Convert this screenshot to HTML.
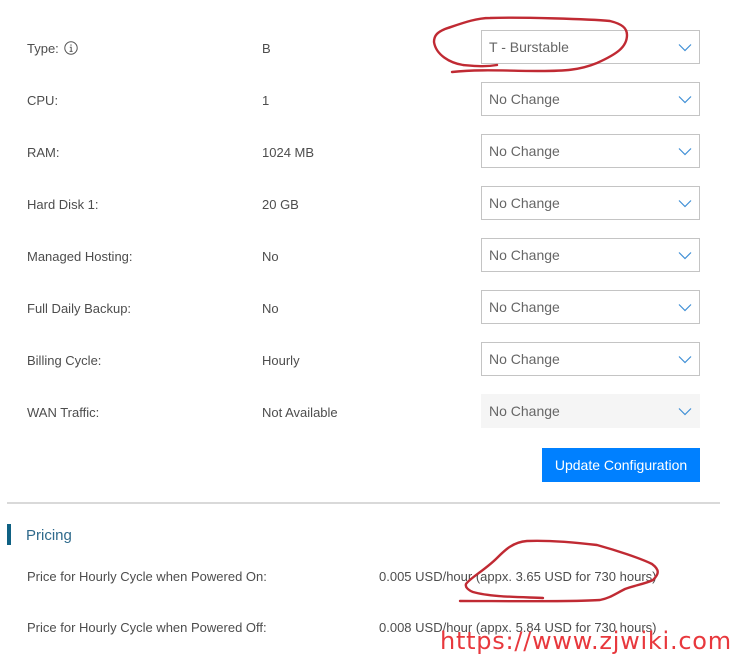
<!DOCTYPE html>
<html><head><meta charset="utf-8">
<style>
html,body{margin:0;padding:0;background:#fff}
#p{position:relative;width:738px;height:658px;overflow:hidden;background:#fff;font-family:"Liberation Sans",sans-serif;font-size:13px;color:#4d4d4d}
.t{position:absolute;line-height:16px;white-space:nowrap}
.s{position:absolute;left:481px;width:217px;height:32px;border:1px solid #c4c4c4;background:#fff;box-sizing:content-box}
.s.d{background:#f5f5f5;border-color:#f5f5f5}
.s span{position:absolute;left:7px;top:8px;line-height:16px;font-size:14px;color:#666}
.s svg{position:absolute;left:196px;top:12px}
</style></head><body><div id="p">
<div class="t" style="left:27px;top:41px">Type:</div>
<svg style="position:absolute;left:64px;top:41px" width="14" height="14" viewBox="0 0 14 14"><circle cx="7" cy="7" r="6.2" fill="none" stroke="#555" stroke-width="1"/><path d="M7 3.4v1.3M5.8 6.2H7.2V10.4M5.6 10.4H8.6" fill="none" stroke="#555" stroke-width="1"/></svg>
<div class="t" style="left:262px;top:41px">B</div>
<div class="t" style="left:27px;top:93px">CPU:</div><div class="t" style="left:262px;top:93px">1</div>
<div class="t" style="left:27px;top:145px">RAM:</div><div class="t" style="left:262px;top:145px">1024 MB</div>
<div class="t" style="left:27px;top:197px">Hard Disk 1:</div><div class="t" style="left:262px;top:197px">20 GB</div>
<div class="t" style="left:27px;top:249px">Managed Hosting:</div><div class="t" style="left:262px;top:249px">No</div>
<div class="t" style="left:27px;top:301px">Full Daily Backup:</div><div class="t" style="left:262px;top:301px">No</div>
<div class="t" style="left:27px;top:353px">Billing Cycle:</div><div class="t" style="left:262px;top:353px">Hourly</div>
<div class="t" style="left:27px;top:405px">WAN Traffic:</div><div class="t" style="left:262px;top:405px">Not Available</div>

<div class="s" style="top:30px"><span>T - Burstable</span><svg width="14" height="9" viewBox="0 0 14 9"><path d="M1 1.5L7 7.5L13 1.5" fill="none" stroke="#3f8fd6" stroke-width="1.2"/></svg></div>
<div class="s" style="top:82px"><span>No Change</span><svg width="14" height="9" viewBox="0 0 14 9"><path d="M1 1.5L7 7.5L13 1.5" fill="none" stroke="#3f8fd6" stroke-width="1.2"/></svg></div>
<div class="s" style="top:134px"><span>No Change</span><svg width="14" height="9" viewBox="0 0 14 9"><path d="M1 1.5L7 7.5L13 1.5" fill="none" stroke="#3f8fd6" stroke-width="1.2"/></svg></div>
<div class="s" style="top:186px"><span>No Change</span><svg width="14" height="9" viewBox="0 0 14 9"><path d="M1 1.5L7 7.5L13 1.5" fill="none" stroke="#3f8fd6" stroke-width="1.2"/></svg></div>
<div class="s" style="top:238px"><span>No Change</span><svg width="14" height="9" viewBox="0 0 14 9"><path d="M1 1.5L7 7.5L13 1.5" fill="none" stroke="#3f8fd6" stroke-width="1.2"/></svg></div>
<div class="s" style="top:290px"><span>No Change</span><svg width="14" height="9" viewBox="0 0 14 9"><path d="M1 1.5L7 7.5L13 1.5" fill="none" stroke="#3f8fd6" stroke-width="1.2"/></svg></div>
<div class="s" style="top:342px"><span>No Change</span><svg width="14" height="9" viewBox="0 0 14 9"><path d="M1 1.5L7 7.5L13 1.5" fill="none" stroke="#3f8fd6" stroke-width="1.2"/></svg></div>
<div class="s d" style="top:394px"><span>No Change</span><svg width="14" height="9" viewBox="0 0 14 9"><path d="M1 1.5L7 7.5L13 1.5" fill="none" stroke="#3f8fd6" stroke-width="1.2"/></svg></div>

<div style="position:absolute;left:542px;top:448px;width:158px;height:34px;background:#0080ff;color:#fff;font-size:14px;line-height:34px;text-align:center">Update Configuration</div>
<div style="position:absolute;left:7px;top:502px;width:713px;height:2px;background:#d9d9d9"></div>
<div style="position:absolute;left:7px;top:524px;width:4px;height:21px;background:#0f6183"></div>
<div class="t" style="left:26px;top:527px;font-size:15px;line-height:18px;color:#2f6a8c">Pricing</div>
<div class="t" style="left:27px;top:569px">Price for Hourly Cycle when Powered On:</div>
<div class="t" style="left:379px;top:569px">0.005 USD/hour (appx. 3.65 USD for 730 hours)</div>
<div class="t" style="left:27px;top:620px">Price for Hourly Cycle when Powered Off:</div>
<div class="t" style="left:379px;top:620px">0.008 USD/hour (appx. 5.84 USD for 730 hours)</div>

<svg style="position:absolute;left:0;top:0" width="738" height="658" viewBox="0 0 738 658" fill="none" stroke="#c02a33" stroke-width="2.4" stroke-linecap="round" stroke-linejoin="round">
<path d="M497 65C485 67 475 66 463 65C450 63 436 55 434 42C434 35 438 32 445 29C460 24 475 18 490 18C520 17 590 19 610 21C622 24 627 28 627 35C627 47 617 54 597 63C580 70 565 71 540 71C510 71 480 69 452 72"/>
<path d="M543 598C520 597 490 597 473 592C468 590 465 587 466 584C470 578 485 570 497 558C505 550 513 542 527 541C550 540 580 543 597 545C615 550 640 558 652 564C660 570 659 574 653 580C645 584 632 586 625 589C615 594 610 598 600 600C570 602 500 601 460 601"/>
</svg>
<div class="t" style="left:440px;top:627px;font-family:'DejaVu Sans',sans-serif;font-size:24px;letter-spacing:0.75px;line-height:28px;color:#e8383d">https://www.zjwiki.com</div>
</div></body></html>
